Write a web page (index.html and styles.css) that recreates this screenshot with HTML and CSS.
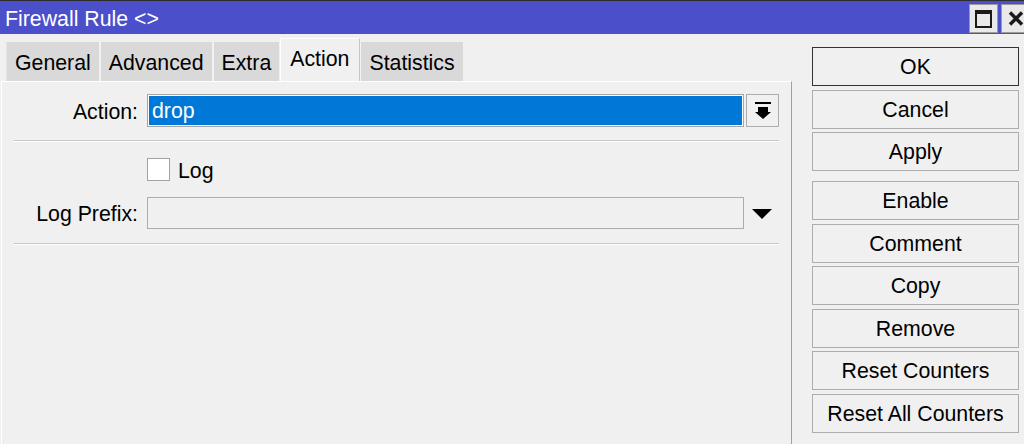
FILE: index.html
```html
<!DOCTYPE html>
<html lang="en">

<head>
    <meta charset="utf-8">
    <meta name="viewport" content="width=device-width, initial-scale=1.0">
    <title>Firewall Rule</title>
    <link rel="stylesheet" href="styles.css">
</head>

<body>
    <header class="titlebar">
        <span class="title">Firewall Rule &lt;&gt;</span>
        <div class="winknapper">
            <button class="winknap">
                <svg width="17" height="18" viewBox="0 0 17 18"><path d="M0 0h17v18H0z M2 4v12h13V4z" fill="#1a1a1a" fill-rule="evenodd"/></svg>
            </button>
            <button class="winknap luk">
                <svg width="16" height="15" viewBox="0 0 16 15"><path d="M2 1.5l12 12M14 1.5l-12 12" stroke="#1a1a1a" stroke-width="3.4"/></svg>
            </button>
        </div>
    </header>

    <div class="indhold">
        <div class="venstre">
            <nav class="faner">
                <div class="fane">General</div>
                <div class="fane">Advanced</div>
                <div class="fane">Extra</div>
                <div class="fane valgt">Action</div>
                <div class="fane">Statistics</div>
            </nav>

            <section class="panel">
                <div class="raekke">
                    <label class="etiket">Action:</label>
                    <div class="felt">
                        <div class="vaerdi valgt-vaerdi">drop</div>
                        <div class="felt-knap">
                            <svg width="16" height="17" viewBox="0 0 16 17"><rect x="0" y="0" width="16" height="2"/><rect x="3" y="5" width="10" height="5"/><polygon points="0,10 16,10 8,17"/></svg>
                        </div>
                    </div>
                </div>

                <div class="skillelinje"></div>

                <div class="raekke afkryds-raekke">
                    <span></span>
                    <div class="felt">
                        <span class="afkryds"></span>
                        <span class="afkryds-tekst">Log</span>
                    </div>
                </div>

                <div class="raekke prefix-raekke">
                    <label class="etiket">Log Prefix:</label>
                    <div class="felt">
                        <div class="vaerdi tom"></div>
                        <div class="pil">
                            <svg width="20" height="10" viewBox="0 0 20 10"><polygon points="0,0 20,0 10,10"/></svg>
                        </div>
                    </div>
                </div>

                <div class="skillelinje anden"></div>
            </section>
        </div>

        <aside class="knapper">
            <button class="knap standard">OK</button>
            <button class="knap">Cancel</button>
            <button class="knap">Apply</button>
            <button class="knap ny-gruppe">Enable</button>
            <button class="knap">Comment</button>
            <button class="knap">Copy</button>
            <button class="knap">Remove</button>
            <button class="knap">Reset Counters</button>
            <button class="knap">Reset All Counters</button>
        </aside>
    </div>
</body>

</html>
```

FILE: styles.css
```css
body {
    margin: 0;
    height: 444px;
    overflow: hidden;
    background-color: #f0f0f0;
    font-family: "Liberation Sans", Arial, sans-serif;
    font-size: 21.3px;
    color: #000;
}

/* titlebar */

.titlebar {
    display: flex;
    height: 33px;
    background-color: #4c4fca;
    border-top: 1px solid #2e2e2e;
}

.title {
    color: #fff;
    padding: 4px 0 0 5px;
    line-height: 29px;
}

.winknapper {
    margin-left: auto;
    display: flex;
    gap: 3px;
    padding-top: 3px;
}

.winknap {
    width: 29px;
    height: 29px;
    box-sizing: border-box;
    padding: 0;
    border: 1px solid #9c9c9c;
    background-color: #e9e9e9;
    display: flex;
    align-items: center;
    justify-content: center;
}

.winknap.luk {
    width: 23px;
    border-right: none;
    justify-content: flex-start;
    padding-left: 6px;
}

/* main area */

.indhold {
    display: flex;
    height: 410px;
}

.venstre {
    width: 792px;
    display: flex;
    flex-direction: column;
    padding-top: 4px;
    box-sizing: border-box;
}

.faner {
    display: flex;
    align-items: flex-end;
    height: 43px;
    margin-left: 6px;
}

.fane {
    height: 39px;
    box-sizing: border-box;
    padding: 4px 8px 0;
    line-height: 35px;
    background-color: #d9d9d9;
    border-left: 1px solid #f4f4f4;
    margin-right: 1px;
}

.fane:first-child {
    border-left-color: #e4e4e4;
}

.fane.valgt {
    height: 43px;
    padding: 0 10px 2px 9px;
    line-height: 41px;
    background-color: #f0f0f0;
    border-left: 1px solid #fff;
    border-top: 1px solid #fff;
    border-right: 1px solid #c6c6c6;
    margin-right: 0;
}

.panel {
    flex: 1;
    margin-left: 1px;
    padding-top: 12px;
    border-top: 1px solid #fff;
    border-left: 1px solid #fff;
    border-right: 1px solid #a0a0a0;
}

.raekke {
    display: grid;
    grid-template-columns: 136px 632px;
    column-gap: 9px;
    align-items: center;
}

.etiket {
    text-align: right;
    padding-top: 2px;
    line-height: 22px;
}

.felt {
    display: flex;
    align-items: center;
}

.vaerdi {
    flex: 1;
    height: 33px;
    box-sizing: border-box;
    border: 1px solid #a6a6a6;
    padding: 1px 0 0 4px;
    line-height: 31px;
}

.valgt-vaerdi {
    background-color: #0078d7;
    color: #fff;
    box-shadow: inset 0 0 0 1px #fff;
}

.felt-knap {
    width: 33px;
    height: 33px;
    margin-left: 2px;
    box-sizing: border-box;
    border: 1px solid #adadad;
    display: flex;
    align-items: center;
    justify-content: center;
}

.skillelinje {
    width: 765px;
    margin: 13px 0 0 12px;
    border-top: 1px solid #c8c8c8;
    border-bottom: 1px solid #fff;
}

.afkryds-raekke {
    margin-top: 16px;
}

.afkryds {
    width: 23px;
    height: 23px;
    box-sizing: border-box;
    background-color: #fff;
    border: 1px solid #a3a3a3;
}

.afkryds-tekst {
    margin-left: 8px;
    padding-top: 4px;
    line-height: 19px;
}

.prefix-raekke {
    margin-top: 16px;
}

.tom {
    height: 32px;
    border-color: #adadad;
}

.pil {
    width: 35px;
    display: flex;
    justify-content: center;
    padding-top: 2px;
}

.skillelinje.anden {
    margin-top: 14px;
}

/* right hand buttons */

.knapper {
    width: 207px;
    margin-left: 20px;
    padding-top: 13px;
    display: flex;
    flex-direction: column;
    gap: 3.5px;
}

.knap {
    height: 39px;
    padding: 2px 0 0;
    font: inherit;
    color: #000;
    background-color: #f0f0f0;
    border: 1px solid #adadad;
}

.knap.standard {
    border-color: #333;
}

.knap.ny-gruppe {
    margin-top: 6.5px;
}
```
